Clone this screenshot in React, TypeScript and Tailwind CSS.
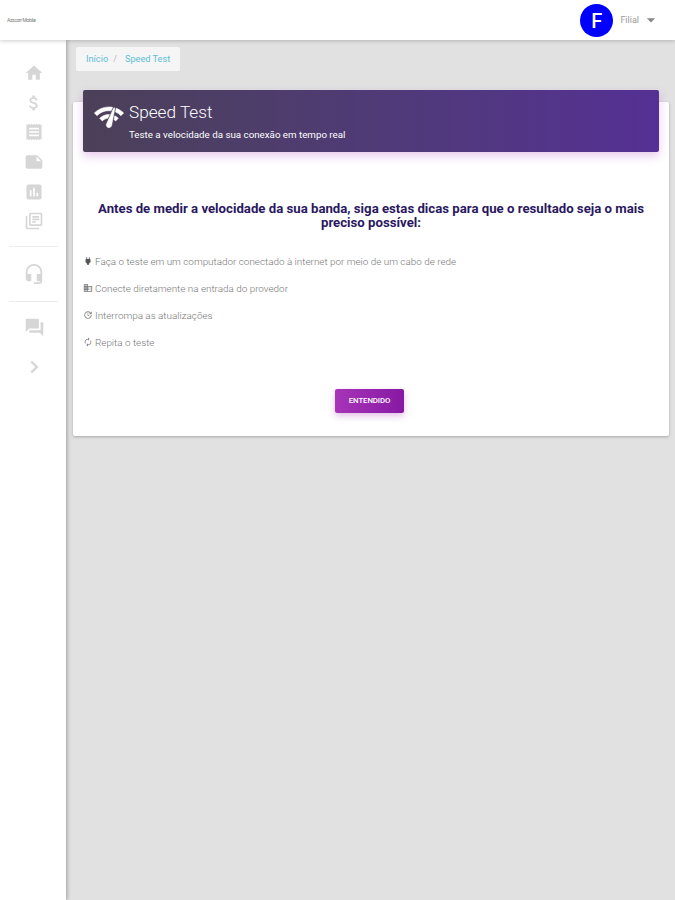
import type { ReactNode } from 'react'
import type { IconType } from 'react-icons'
import {
  MdArrowDropDown,
  MdAssessment,
  MdAttachMoney,
  MdAutorenew,
  MdBusiness,
  MdHeadsetMic,
  MdHome,
  MdNote,
  MdOutlineLibraryBooks,
  MdPower,
  MdQuestionAnswer,
  MdReceipt,
  MdUpdate,
} from 'react-icons/md'

const mainMenu: IconType[] = [
  MdHome,
  MdAttachMoney,
  MdReceipt,
  MdNote,
  MdAssessment,
  MdOutlineLibraryBooks,
]

const tips: { icon: IconType; text: string; iconClass: string }[] = [
  {
    icon: MdPower,
    text: 'Faça o teste em um computador conectado à internet por meio de um cabo de rede',
    iconClass: 'text-[#555]',
  },
  { icon: MdBusiness, text: 'Conecte diretamente na entrada do provedor', iconClass: 'text-[#777]' },
  { icon: MdUpdate, text: 'Interrompa as atualizações', iconClass: 'text-[#888]' },
  { icon: MdAutorenew, text: 'Repita o teste', iconClass: 'text-[#888]' },
]

// Slightly heavier than the stock network check icon
function NetworkIcon({ className }: { className?: string }) {
  return (
    <svg viewBox="0 0 24 24" fill="currentColor" stroke="currentColor" strokeWidth="0.4" className={className}>
      <path d="M15.9 5c-.17 0-.32.09-.41.23l-.07.15-5.18 11.65c-.16.29-.26.61-.26.96 0 1.11.9 2.01 2.01 2.01.96 0 1.77-.68 1.96-1.59l.01-.03L16.4 5.5c0-.28-.22-.5-.5-.5z" />
      <path d="M1 9l2 2c2.88-2.88 6.79-4.08 10.53-3.62l1.19-2.68C9.89 3.84 4.74 5.27 1 9z" />
      <path d="M21 11l2-2c-1.64-1.64-3.55-2.82-5.59-3.57l-.53 2.82c1.5.62 2.9 1.53 4.12 2.75z" />
      <path d="M17 15l2-2c-.8-.8-1.7-1.42-2.66-1.89l-.55 2.92c.42.27.83.59 1.21.97z" />
      <path d="M5 13l2 2c1.13-1.13 2.56-1.79 4.03-2l1.28-2.88C9.7 9.94 7.01 10.99 5 13z" />
    </svg>
  )
}

function Header() {
  return (
    <header className="relative z-10 flex h-10 items-center justify-between bg-white pr-[14px] pl-[7px] shadow-[0_1px_4px_rgba(0,0,0,0.2)]">
      <span className="mt-[2px] text-[5px] tracking-[-0.35px] text-[#777]">Azzcorr Mobile</span>
      <div className="flex items-center">
        <div className="flex h-[33px] w-[33px] items-center justify-center rounded-full bg-[#0000ff] pt-[2px] text-[20px] font-medium text-white">
          F
        </div>
        <span className="mt-[2px] ml-[7px] text-[9px] text-[#999]">Filial</span>
        <MdArrowDropDown className="ml-[2px] h-5 w-5 text-[#888]" />
      </div>
    </header>
  )
}

function MenuItem({ children }: { children: ReactNode }) {
  return <div className="flex h-[29.7px] items-center justify-center">{children}</div>
}

function Sidebar() {
  return (
    <aside className="relative z-[5] w-[66px] shrink-0 bg-white pt-[18px] text-[#d6d6d6] shadow-[1px_0_4px_rgba(0,0,0,0.3)]">
      <nav className="pl-[2px]">
        {mainMenu.map((Icon, i) => (
          <MenuItem key={i}>
            <Icon className="h-5 w-5" />
          </MenuItem>
        ))}
      </nav>
      <div className="mt-[10px] mr-[8px] ml-[9px] border-t border-[#ececec]" />
      <div className="flex h-[54px] items-center justify-center pl-[2px]">
        <MdHeadsetMic className="h-[22px] w-[22px]" />
      </div>
      <div className="mr-[8px] ml-[9px] border-t border-[#ececec]" />
      <div className="flex h-[50px] items-center justify-center pl-[2px]">
        <MdQuestionAnswer className="h-[21px] w-[21px]" />
      </div>
      <div className="flex h-[30px] items-center justify-center pl-[2px]">
        <svg viewBox="0 0 24 24" className="h-[22px] w-[22px]" fill="none" stroke="currentColor" strokeWidth="2.6">
          <path d="M9 6l6 6-6 6" />
        </svg>
      </div>
    </aside>
  )
}

export default function App() {
  return (
    <div className="flex h-[900px] w-[675px] flex-col overflow-hidden bg-[#e1e1e1] font-['Roboto',sans-serif]">
      <Header />
      <div className="flex flex-1">
        <Sidebar />
        <main className="flex-1 pr-[6px] pl-[7px]">
          <div className="mt-[7px] ml-[3px] flex h-[24px] w-[104px] items-center rounded-[2px] bg-[#f5f5f5] pl-[10px] text-[9.2px] text-[#5cc0d4]">
            <span>Início</span>
            <span className="mr-[8px] ml-[5px] text-[#bbb]">/</span>
            <span>Speed Test</span>
          </div>

          <section className="mt-[31px] h-[334px] rounded-[2px] bg-white px-[10px] shadow-[0_1px_3px_rgba(0,0,0,0.25)]">
            <div className="relative -top-[12px] flex h-[62px] items-start rounded-[2px] bg-linear-to-r from-[#4b4058] to-[#553094] pl-[10px] text-white shadow-[0_4px_10px_rgba(156,39,176,0.25)]">
              <NetworkIcon className="mt-[11px] h-8 w-8" />
              <div className="ml-[4px] pt-[11px]">
                <h1 className="text-[17.2px] leading-[23px] font-light">Speed Test</h1>
                <p className="text-[9.75px] leading-[22px]">Teste a velocidade da sua conexão em tempo real</p>
              </div>
            </div>

            <h2 className="mt-[38px] text-center text-[13.2px] leading-[14px] font-bold text-[#2a1860]">
              Antes de medir a velocidade da sua banda, siga estas dicas para que o resultado seja o mais preciso
              possível:
            </h2>

            <ul className="mt-[19px]">
              {tips.map(({ icon: Icon, text, iconClass }) => (
                <li key={text} className="flex h-[27px] items-center text-[9.89px] font-light text-[#777]">
                  <Icon className={`mr-[2px] mb-[3px] h-[10px] w-[10px] ${iconClass}`} />
                  {text}
                </li>
              ))}
            </ul>

            <div className="mt-[32px] flex justify-center pr-[3px]">
              <button className="h-[24px] w-[69px] rounded-[2px] bg-linear-to-r from-[#a834b8] to-[#8618a4] text-[7.8px] font-medium tracking-[-0.1px] text-white shadow-[0_3px_7px_rgba(156,39,176,0.3)]">
                ENTENDIDO
              </button>
            </div>
          </section>
        </main>
      </div>
    </div>
  )
}
